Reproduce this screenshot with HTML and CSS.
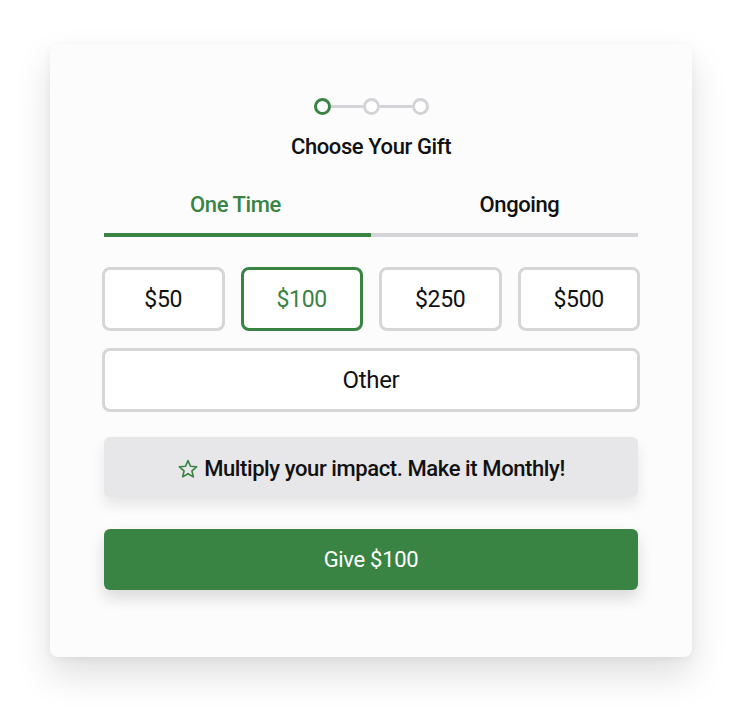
FILE: index.html
```html
<!DOCTYPE html>
<html>
<head>
<meta charset="utf-8">
<link rel="stylesheet" href="styles.css">
</head>
<body>
<div class="card">
  <div class="stepper">
    <span class="dot active"></span>
    <span class="line"></span>
    <span class="dot"></span>
    <span class="line"></span>
    <span class="dot"></span>
  </div>
  <h1 class="title">Choose Your Gift</h1>
  <div class="tabs">
    <div class="tab active">One Time</div>
    <div class="tab second">Ongoing</div>
  </div>
  <div class="amounts">
    <button class="amt">$50</button>
    <button class="amt selected">$100</button>
    <button class="amt">$250</button>
    <button class="amt">$500</button>
    <button class="amt other">Other</button>
  </div>
  <div class="banner">
    <svg class="star" width="22" height="22" viewBox="0 0 24 24"><path d="M12 2.8l2.7 6.2 6.7.6-5.1 4.4 1.5 6.6L12 17.1l-5.8 3.5 1.5-6.6-5.1-4.4 6.7-.6z" fill="none" stroke="#398443" stroke-width="1.8" stroke-linejoin="round"/></svg>
    <span>Multiply your impact. Make it Monthly!</span>
  </div>
  <button class="give">Give $100</button>
</div>
</body>
</html>
```

FILE: styles.css
```css
* { box-sizing: border-box; }
html, body { min-height: 100vh; }
body {
  margin: 0;
  padding: 44px 0 0 50px;
  background: #ffffff;
  font-family: Roboto, "Liberation Sans", sans-serif;
  color: #111;
}
.card {
  width: 642px;
  height: 613px;
  background: #fcfcfd;
  border-radius: 8px;
  box-shadow: 0 18px 36px rgba(0,0,0,0.13), 0 2px 8px rgba(0,0,0,0.05);
  padding: 54px 54px 0 54px;
  display: flex;
  flex-direction: column;
}
.stepper {
  display: flex;
  align-items: center;
  justify-content: center;
  height: 17px;
}
.dot {
  width: 17px;
  height: 17px;
  border-radius: 50%;
  border: 3px solid #d4d4d8;
  background: #fff;
}
.dot.active { border-color: #398443; }
.line {
  width: 32px;
  height: 3px;
  background: #d4d4d8;
}
.title {
  margin: 19px 0 0;
  font-size: 22px;
  font-weight: 500;
  text-align: center;
  line-height: 26px;
  letter-spacing: -0.4px;
}
.tabs {
  display: flex;
  margin-top: 32px;
}
.tab {
  flex: 1 1 0;
  text-align: center;
  font-size: 22px;
  line-height: 26px;
  padding-bottom: 15px;
  border-bottom: 4px solid #d4d4d8;
  font-weight: 500;
  letter-spacing: -0.4px;
}
.tab.second { text-indent: 30px; }
.tab.active { color: #398443; border-bottom-color: #398443; text-indent: -4px; }
.amounts {
  display: grid;
  grid-template-columns: repeat(4, 1fr);
  gap: 16px;
  margin: 30px -2px 0 -2px;
}
.amt {
  height: 64px;
  border: 3px solid #d6d6d9;
  border-radius: 8px;
  background: #fff;
  font-family: inherit;
  font-size: 23px;
  color: #111;
  letter-spacing: -0.3px;
}
.amt.selected { border-color: #398443; color: #398443; }
.amt.other { grid-column: 1 / -1; margin-top: 1px; font-size: 24px; }
.banner {
  margin-top: 25px;
  height: 60px;
  padding-top: 3px;
  background: #e7e6e9;
  border-radius: 6px;
  display: flex;
  align-items: center;
  justify-content: center;
  gap: 5px;
  font-size: 22px;
  font-weight: 500;
  letter-spacing: -0.4px;
  box-shadow: 0 8px 14px rgba(0,0,0,0.09);
}
.give {
  margin-top: 32px;
  height: 61px;
  border: 0;
  border-radius: 6px;
  background: #398443;
  color: #fff;
  font-family: inherit;
  font-size: 22px;
  letter-spacing: -0.3px;
  box-shadow: 0 8px 16px rgba(0,0,0,0.14);
}
```
